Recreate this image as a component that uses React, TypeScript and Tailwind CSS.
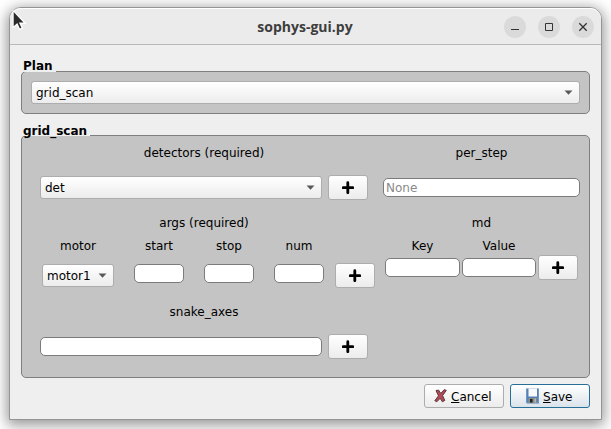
import type { ReactNode } from "react";

const INPUT = "h-[19px] rounded-[5px] border border-[#7b7b7b] bg-white px-[2px] outline-none placeholder:text-[#8a8a8a]";

function Label({ className = "", children }: { className?: string; children: ReactNode }) {
  return <div className={`h-4 text-center whitespace-nowrap leading-4 ${className}`}>{children}</div>;
}

function Select({ value, className = "" }: { value: string; className?: string }) {
  return (
    <button
      className={`flex h-[23px] shrink-0 items-center justify-between rounded-[3px] border border-[#adadad] bg-linear-to-b from-white to-[#ececec] pr-[6px] pl-1 ${className}`}
    >
      <span className="leading-4">{value}</span>
      <svg width="9" height="5" viewBox="0 0 9 5" className="shrink-0">
        <path d="M0.5 0.5h8L4.5 4.8z" fill="#585858" />
      </svg>
    </button>
  );
}

function AddButton({ className = "" }: { className?: string }) {
  return (
    <button
      className={`flex h-[25px] w-10 shrink-0 items-center justify-center rounded-[3px] border border-[#adadad] bg-linear-to-b from-white to-[#ececec] ${className}`}
    >
      <svg width="12" height="13" viewBox="0 0 12 13">
        <path d="M5.8 1.7v10M1.2 6.7h9.6" stroke="#000" strokeWidth="2.8" strokeLinecap="round" />
      </svg>
    </button>
  );
}

function Group({ title, className = "", titleClass = "", children }: { title: string; className?: string; titleClass?: string; children: ReactNode }) {
  return (
    <section className={`relative rounded-[5px] border border-[#7f7f7f] bg-[#c4c4c4] ${className}`}>
      <h2 className={`absolute -top-[14px] left-px h-[14px] bg-[#efefef] pr-[3px] font-bold whitespace-nowrap ${titleClass}`}>
        {title}
      </h2>
      {children}
    </section>
  );
}

function Round({ children }: { children: ReactNode }) {
  return (
    <button className="flex size-[22px] items-center justify-center rounded-full bg-[#dadada]">
      <svg width="12" height="12" viewBox="0 0 12 12" fill="none" stroke="#333">
        {children}
      </svg>
    </button>
  );
}

export default function App() {
  return (
    <div className="relative h-[429px] w-[611px] overflow-hidden bg-white pt-[7px] pl-[9px] font-['DejaVu_Sans',sans-serif] text-[12px] text-black">
      <main className="flex h-[413px] w-[593px] flex-col rounded-t-[12px] border border-[#959595] bg-[#efefef] shadow-[0_3px_14px_2px_rgba(0,0,0,0.42)]">
        <header className="flex h-[37px] shrink-0 items-center rounded-t-[11px] border-t border-b border-t-white border-b-[#b9b9b9] bg-[#ebebeb] pr-[7px]">
          <h1 className="flex-1 pl-[96px] text-center font-['Open_Sans',sans-serif] text-[14px] font-bold text-[#3d3d3d]">
            sophys-gui.py
          </h1>
          <div className="flex gap-3">
            <Round><path d="M2 8.5h8" /></Round>
            <Round><path d="M2.5 2.5h7v7h-7z" /></Round>
            <Round><path d="M2.3 2.3l7.4 7.4M9.7 2.3L2.3 9.7" strokeWidth="1.3" /></Round>
          </div>
        </header>

        <div className="flex flex-col px-[11px] pt-[26px]">
          <Group title="Plan" titleClass="leading-[16px]" className="h-[43px] px-[9px] pt-[9px]">
            <Select value="grid_scan" className="w-full" />
          </Group>

          <Group title="grid_scan" titleClass="leading-[18px]" className="mt-[21px] flex h-[243px] pl-[18px]">
            <div className="flex w-[343px] shrink-0 flex-col">
              <Label className="mt-[9px] w-[328px]">detectors (required)</Label>
              <div className="mt-[14px] flex items-center gap-[6px]">
                <Select value="det" className="w-[282px]" />
                <AddButton />
              </div>
              <Label className="mt-[15px] w-[328px]">args (required)</Label>
              <div className="mt-[7px] flex pl-[2px]">
                <div className="w-[72px]">
                  <Label>motor</Label>
                  <Select value="motor1" className="mt-[10px] w-full" />
                </div>
                {["start", "stop", "num"].map((name) => (
                  <div key={name} className="ml-[20px] w-[50px]">
                    <Label>{name}</Label>
                    <input className={`mt-[10px] block w-full ${INPUT}`} />
                  </div>
                ))}
                <AddButton className="mt-[25px] ml-[11px]" />
              </div>
              <Label className="mt-[16px] w-[328px]">snake_axes</Label>
              <div className="mt-[14px] flex items-center gap-[6px]">
                <input className={`w-[282px] ${INPUT}`} />
                <AddButton />
              </div>
            </div>

            <div className="flex w-[197px] shrink-0 flex-col">
              <Label className="mt-[9px]">per_step</Label>
              <input placeholder="None" className={`mt-[17px] w-full ${INPUT}`} />
              <Label className="mt-[18px]">md</Label>
              <div className="mt-[7px] flex pl-[2px]">
                <div className="w-[75px]">
                  <Label>Key</Label>
                  <input className={`mt-[4px] block w-full ${INPUT}`} />
                </div>
                <div className="ml-[2px] w-[74px]">
                  <Label>Value</Label>
                  <input className={`mt-[4px] block w-full ${INPUT}`} />
                </div>
                <AddButton className="mt-[17px] ml-[2px]" />
              </div>
            </div>
          </Group>

          <footer className="mt-[6px] flex justify-end gap-[6px]">
            <button className="flex h-6 w-20 items-center rounded-[3px] border border-[#adadad] bg-linear-to-b from-white to-[#ececec] pl-[8px]">
              <svg width="16" height="16" viewBox="0 0 16 16">
                <path
                  d="M3 2.6l2.5-.6 2.3 3.4 3.5-3.8 2 .8-3.7 5.2 2.2 4.8-2.4 1.4-2.2-3.5-3.4 3.5-2-1.1 3.7-4.9z"
                  fill="#b34a55"
                  stroke="#4f2c30"
                  strokeWidth="0.9"
                  strokeLinejoin="round"
                />
              </svg>
              <span className="ml-[2px] pt-[2px] leading-4"><u className="underline-offset-1">C</u>ancel</span>
            </button>
            <button className="flex h-6 w-20 items-center rounded-[3px] border border-[#286f98] bg-linear-to-b from-white to-[#dbe3ea] pl-[14px]">
              <svg width="16" height="16" viewBox="0 0 16 16">
                <path d="M1 .5h13v15H2l-1-1z" fill="#5781b5" />
                <path d="M1.5 1v13.5h12V1" stroke="#7496c3" fill="none" />
                <path d="M3.5.5h8.5v8H3.5z" fill="#f8fafc" />
                <path d="M3.5 10h8v5h-8z" fill="#8b8d85" />
                <path d="M5 11h2.5v3.5H5z" fill="#222" />
                <path d="M9.5 10.5H11v4H9.5z" fill="#b9bab1" />
              </svg>
              <span className="ml-[2px] pt-[2px] leading-4"><u className="underline-offset-1">S</u>ave</span>
            </button>
          </footer>
        </div>
      </main>
      <svg className="absolute top-[10px] left-[12px]" width="15" height="22" viewBox="0 0 15 22">
        <path d="M1.4 1.5v15.6l3.7-3.2 2.5 5.4 2.6-1.2-2.3-5h5z" fill="#fff" stroke="#fff" strokeWidth="1.6" />
        <path d="M1.7 2v14.2l3.6-3.2 2.6 5.5 1.5-.7-2.5-5.4h4.6z" fill="#2b2b2b" />
      </svg>
    </div>
  );
}
